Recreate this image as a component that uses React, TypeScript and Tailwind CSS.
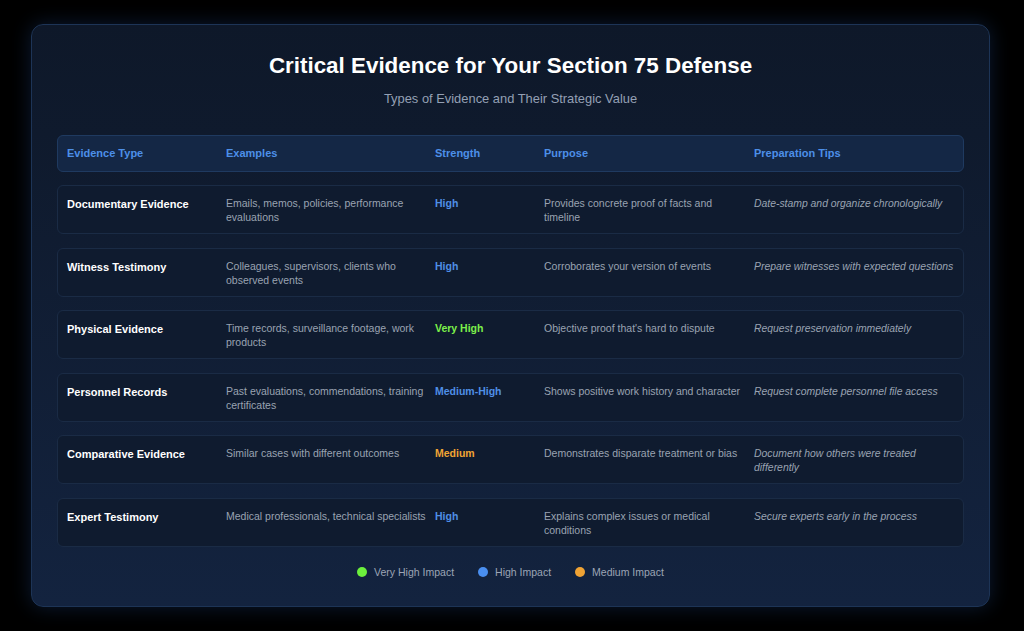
//Data
const rows = [
  {
    type: "Documentary Evidence",
    examples: "Emails, memos, policies, performance evaluations",
    strength: "High",
    purpose: "Provides concrete proof of facts and timeline",
    tips: "Date-stamp and organize chronologically",
  },
  {
    type: "Witness Testimony",
    examples: "Colleagues, supervisors, clients who observed events",
    strength: "High",
    purpose: "Corroborates your version of events",
    tips: "Prepare witnesses with expected questions",
  },
  {
    type: "Physical Evidence",
    examples: "Time records, surveillance footage, work products",
    strength: "Very High",
    purpose: "Objective proof that's hard to dispute",
    tips: "Request preservation immediately",
  },
  {
    type: "Personnel Records",
    examples: "Past evaluations, commendations, training certificates",
    strength: "Medium-High",
    purpose: "Shows positive work history and character",
    tips: "Request complete personnel file access",
  },
  {
    type: "Comparative Evidence",
    examples: "Similar cases with different outcomes",
    strength: "Medium",
    purpose: "Demonstrates disparate treatment or bias",
    tips: "Document how others were treated differently",
  },
  {
    type: "Expert Testimony",
    examples: "Medical professionals, technical specialists",
    strength: "High",
    purpose: "Explains complex issues or medical conditions",
    tips: "Secure experts early in the process",
  },
];

function strengthColor(s: string) {
  if (s === "Very High") return "text-[#7cf04a]";
  if (s === "Medium") return "text-[#f0a534]";
  return "text-[#4f8fe6]";
}

function App() {
  return (
    <div className="min-h-screen w-full bg-black pt-[24px] pl-[31px] font-['Liberation_Sans',Arial,sans-serif]">
      <div className="w-[959px] h-[583px] rounded-[12px] border border-[#1d3456] bg-gradient-to-b from-[#0e1829] to-[#13233f] shadow-[0_0_20px_rgba(40,90,170,0.3)] px-[25px] pt-[27px]">
        {/* Title */}
        <h1 className="text-center text-white font-bold text-[22.4px] leading-[28px]">
          Critical Evidence for Your Section 75 Defense
        </h1>
        <p className="mt-[10px] text-center text-[12.9px] leading-[18px] text-[#94a0b4]">
          Types of Evidence and Their Strategic Value
        </p>

        {/* Table header */}
        <div className="mt-[27px] grid grid-cols-[159px_209px_109px_210px_1fr] items-center h-[37px] px-[9px] rounded-[6px] border border-[#1f3a60] bg-[#142745] text-[11px] font-bold text-[#4d8fe8]">
          <span>Evidence Type</span>
          <span>Examples</span>
          <span>Strength</span>
          <span>Purpose</span>
          <span>Preparation Tips</span>
        </div>

        {/* Rows */}
        <div className="mt-[13px] flex flex-col gap-[13.5px]">
          {rows.map((r) => (
            <div
              key={r.type}
              className="grid grid-cols-[159px_209px_109px_210px_1fr] h-[49px] px-[9px] py-[10px] rounded-[6px] border border-[#1a2b45] bg-[#0f1b2f] text-[10.5px] leading-[14px]"
            >
              <span className="text-white font-bold text-[11px] pt-[1px]">{r.type}</span>
              <span className="text-[#9aa3b2] pr-[2px]">{r.examples}</span>
              <span className={`font-bold text-[10.5px] ${strengthColor(r.strength)}`}>
                {r.strength}
              </span>
              <span className="text-[#9aa3b2] pr-[6px]">{r.purpose}</span>
              <span className="text-[#9aa3b2] italic text-[10.4px] pt-[1px]">{r.tips}</span>
            </div>
          ))}
        </div>

        {/* Legend */}
        <div className="mt-[17px] flex justify-center items-center gap-[24px] text-[10.5px] leading-[16px] text-[#9ca5b5]">
          <div className="flex items-center gap-[7px]">
            <span className="w-[10px] h-[10px] rounded-full bg-[#6cf03c]" />
            <span>Very High Impact</span>
          </div>
          <div className="flex items-center gap-[7px]">
            <span className="w-[10px] h-[10px] rounded-full bg-[#4a8ff0]" />
            <span>High Impact</span>
          </div>
          <div className="flex items-center gap-[7px]">
            <span className="w-[10px] h-[10px] rounded-full bg-[#f0a334]" />
            <span>Medium Impact</span>
          </div>
        </div>
      </div>
    </div>
  );
}

export default App;
